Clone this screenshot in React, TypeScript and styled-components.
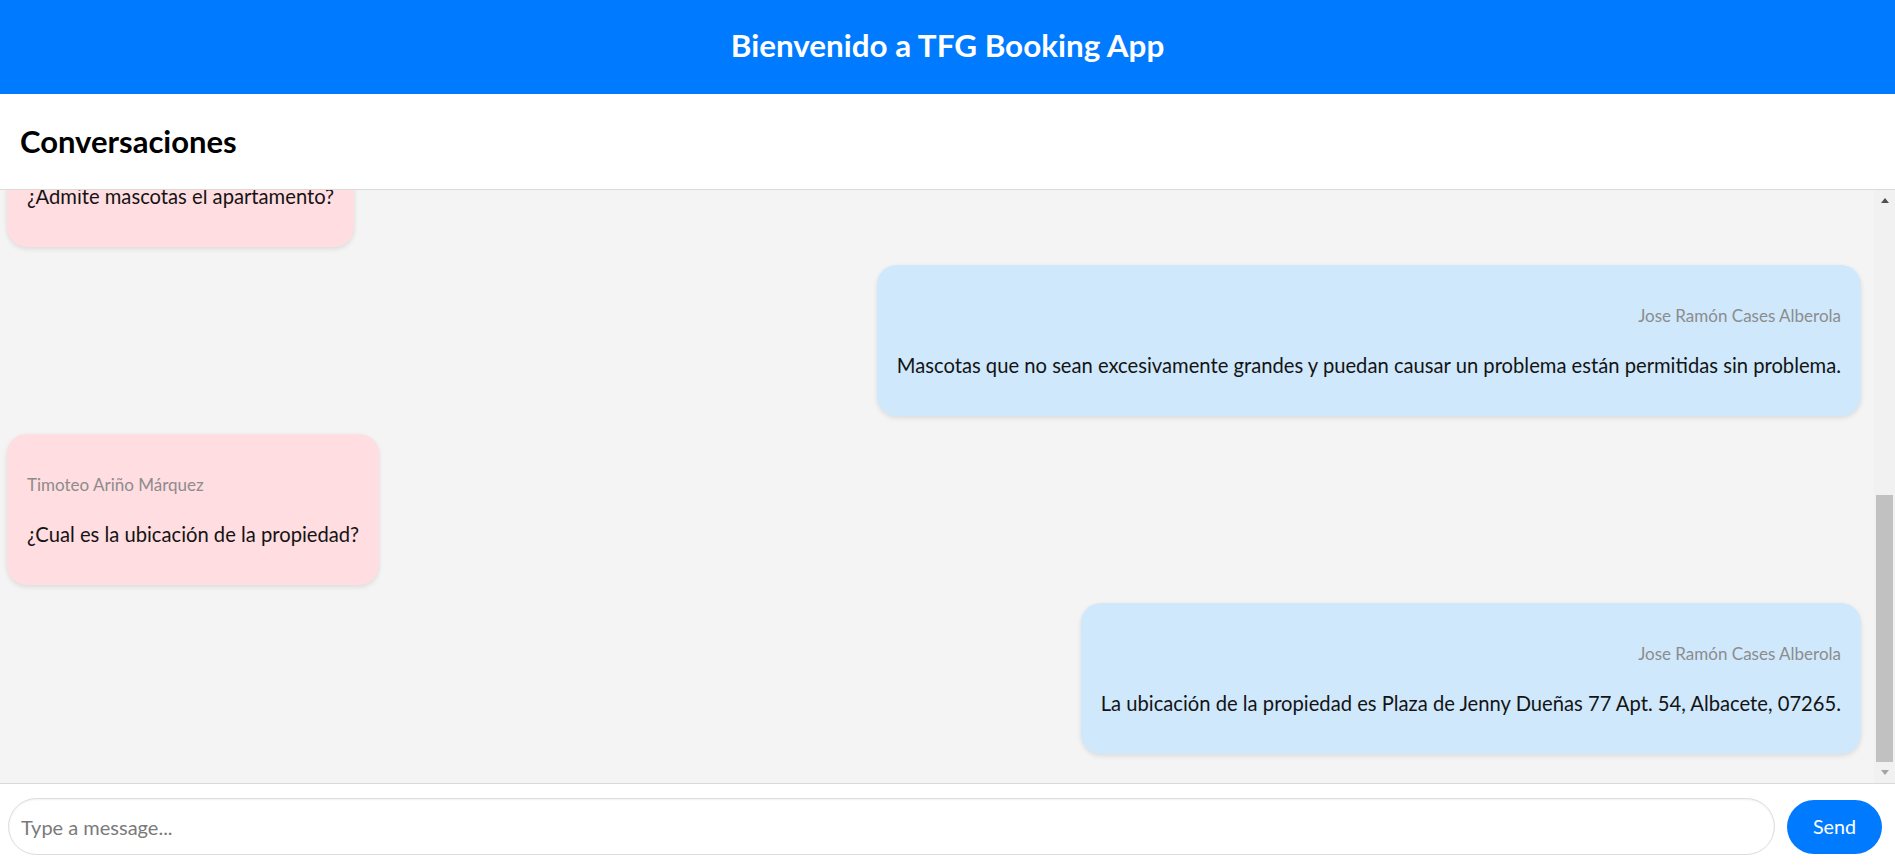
import React, { useCallback, useLayoutEffect, useRef, useState } from "react";
import styled, { createGlobalStyle } from "styled-components";

const GlobalStyle = createGlobalStyle`
  * { box-sizing: border-box; }
  html, body { margin: 0; padding: 0; height: 100%; }
  body {
    font-family: Lato, "Noto Sans", sans-serif;
    background: #ffffff;
    overflow: hidden;
  }
`;

const Page = styled.div`
  display: flex;
  flex-direction: column;
  height: 100vh;
`;

const TopBar = styled.header`
  height: 94px;
  flex: 0 0 auto;
  background: #007bff;
  display: flex;
  align-items: center;
  justify-content: center;
`;

const AppTitle = styled.h1`
  margin: 0 0 2px;
  color: #ffffff;
  font-size: 31.4px;
  font-weight: 700;
  line-height: 1.2;
`;

const SubHeader = styled.div`
  height: 96px;
  flex: 0 0 auto;
  background: #ffffff;
  border-bottom: 1px solid #dadada;
  display: flex;
  align-items: center;
  padding: 0 20px;
`;

const SectionTitle = styled.h2`
  margin: 0;
  color: #000000;
  font-size: 31px;
  font-weight: 700;
  line-height: 1.2;
`;

const MessagePane = styled.div`
  flex: 1 1 auto;
  min-height: 0;
  display: flex;
  background: #f4f4f4;
`;

const MessageList = styled.div`
  flex: 1 1 auto;
  min-width: 0;
  overflow-y: auto;
  display: flex;
  flex-direction: column;
  gap: 18px;
  padding: 28px 13px 29px 7px;
  scrollbar-width: none;

  &::-webkit-scrollbar {
    display: none;
  }
`;

const ScrollRail = styled.div`
  flex: 0 0 21px;
  display: flex;
  flex-direction: column;
  background: #f1f1f1;
`;

const RailButton = styled.div`
  flex: 0 0 21px;
  display: flex;
  align-items: center;
  justify-content: center;
`;

const Arrow = styled.span<{ $dir: "up" | "down" }>`
  width: 0;
  height: 0;
  border-left: 4.5px solid transparent;
  border-right: 4.5px solid transparent;
  ${(p) =>
    p.$dir === "up"
      ? "border-bottom: 5px solid #505050;"
      : "border-top: 5px solid #a3a3a3;"}
`;

const RailTrack = styled.div`
  flex: 1 1 auto;
  min-height: 0;
  display: flex;
  flex-direction: column;
  padding: 0 2px;
`;

const RailThumb = styled.div`
  flex: 0 0 auto;
  background: #c1c1c1;
`;

const Bubble = styled.div<{ $own: boolean }>`
  flex: 0 0 auto;
  align-self: ${(p) => (p.$own ? "flex-end" : "flex-start")};
  max-width: 70%;
  display: flex;
  flex-direction: column;
  gap: 25px;
  padding: 39px 20px 37px;
  border-radius: 20px;
  background: ${(p) => (p.$own ? "#cfe8fc" : "#ffdde0")};
  box-shadow: 0 2px 5px rgba(0, 0, 0, 0.1);
  text-align: ${(p) => (p.$own ? "right" : "left")};
`;

const Sender = styled.div`
  font-size: 17px;
  line-height: 23px;
  color: #8c8c8c;
  white-space: nowrap;
`;

const Text = styled.div`
  font-size: 20.2px;
  line-height: 27px;
  color: #141414;
`;

const Composer = styled.form`
  height: 84px;
  flex: 0 0 auto;
  background: #ffffff;
  border-top: 1px solid #dadada;
  display: flex;
  align-items: center;
  gap: 12px;
  padding: 14px 13px 12px 8px;
`;

const MessageInput = styled.input`
  flex: 1 1 auto;
  height: 57px;
  border: 1px solid #dcdcdc;
  border-radius: 29px;
  padding: 0 12px;
  font-family: Lato, "Noto Sans", sans-serif;
  font-size: 20px;
  color: #222;
  background: #ffffff;
  box-shadow: inset 0 1px 2px rgba(0, 0, 0, 0.06);
  outline: none;

  &::placeholder {
    color: #7a7a7a;
  }
`;

const SendButton = styled.button`
  flex: 0 0 auto;
  width: 95px;
  height: 54px;
  border: none;
  border-radius: 27px;
  background: #007bff;
  color: #ffffff;
  font-family: Lato, "Noto Sans", sans-serif;
  font-size: 19.7px;
  cursor: pointer;
`;

type Msg = { own: boolean; sender: string; text: string };

const HOST = "Jose Ramón Cases Alberola";
const GUEST = "Timoteo Ariño Márquez";

const messages: Msg[] = [
  { own: false, sender: GUEST, text: "Hola, estoy interesado en reservar el apartamento." },
  { own: true, sender: HOST, text: "Hola Timoteo, encantado. ¿En qué puedo ayudarte?" },
  { own: false, sender: GUEST, text: "¿Está disponible para el próximo fin de semana?" },
  { own: false, sender: GUEST, text: "¿Admite mascotas el apartamento?" },
  {
    own: true,
    sender: HOST,
    text: "Mascotas que no sean excesivamente grandes y puedan causar un problema están permitidas sin problema.",
  },
  { own: false, sender: GUEST, text: "¿Cual es la ubicación de la propiedad?" },
  {
    own: true,
    sender: HOST,
    text: "La ubicación de la propiedad es Plaza de Jenny Dueñas 77 Apt. 54, Albacete, 07265.",
  },
];

const BUTTON = 21;

export default function App() {
  const listRef = useRef<HTMLDivElement>(null);
  const [thumb, setThumb] = useState({ top: 0, size: 0 });

  const measure = useCallback(() => {
    const el = listRef.current;
    if (!el) return;
    const track = el.clientHeight - BUTTON * 2;
    const ratio = el.scrollHeight > 0 ? el.clientHeight / el.scrollHeight : 1;
    const size = Math.max(20, Math.round(track * Math.min(1, ratio)));
    const maxScroll = el.scrollHeight - el.clientHeight;
    const top = maxScroll > 0 ? Math.round(((track - size) * el.scrollTop) / maxScroll) : 0;
    setThumb({ top, size });
  }, []);

  useLayoutEffect(() => {
    const el = listRef.current;
    if (el) el.scrollTop = el.scrollHeight;
    measure();
  }, [measure]);

  return (
    <Page>
      <GlobalStyle />
      <TopBar>
        <AppTitle>Bienvenido a TFG Booking App</AppTitle>
      </TopBar>
      <SubHeader>
        <SectionTitle>Conversaciones</SectionTitle>
      </SubHeader>
      <MessagePane>
        <MessageList ref={listRef} onScroll={measure}>
          {messages.map((m, i) => (
            <Bubble key={i} $own={m.own}>
              <Sender>{m.sender}</Sender>
              <Text>{m.text}</Text>
            </Bubble>
          ))}
        </MessageList>
        <ScrollRail aria-hidden="true">
          <RailButton>
            <Arrow $dir="up" />
          </RailButton>
          <RailTrack>
            <RailThumb style={{ marginTop: thumb.top, height: thumb.size }} />
          </RailTrack>
          <RailButton>
            <Arrow $dir="down" />
          </RailButton>
        </ScrollRail>
      </MessagePane>
      <Composer onSubmit={(e) => e.preventDefault()}>
        <MessageInput type="text" placeholder="Type a message..." />
        <SendButton type="submit">Send</SendButton>
      </Composer>
    </Page>
  );
}
